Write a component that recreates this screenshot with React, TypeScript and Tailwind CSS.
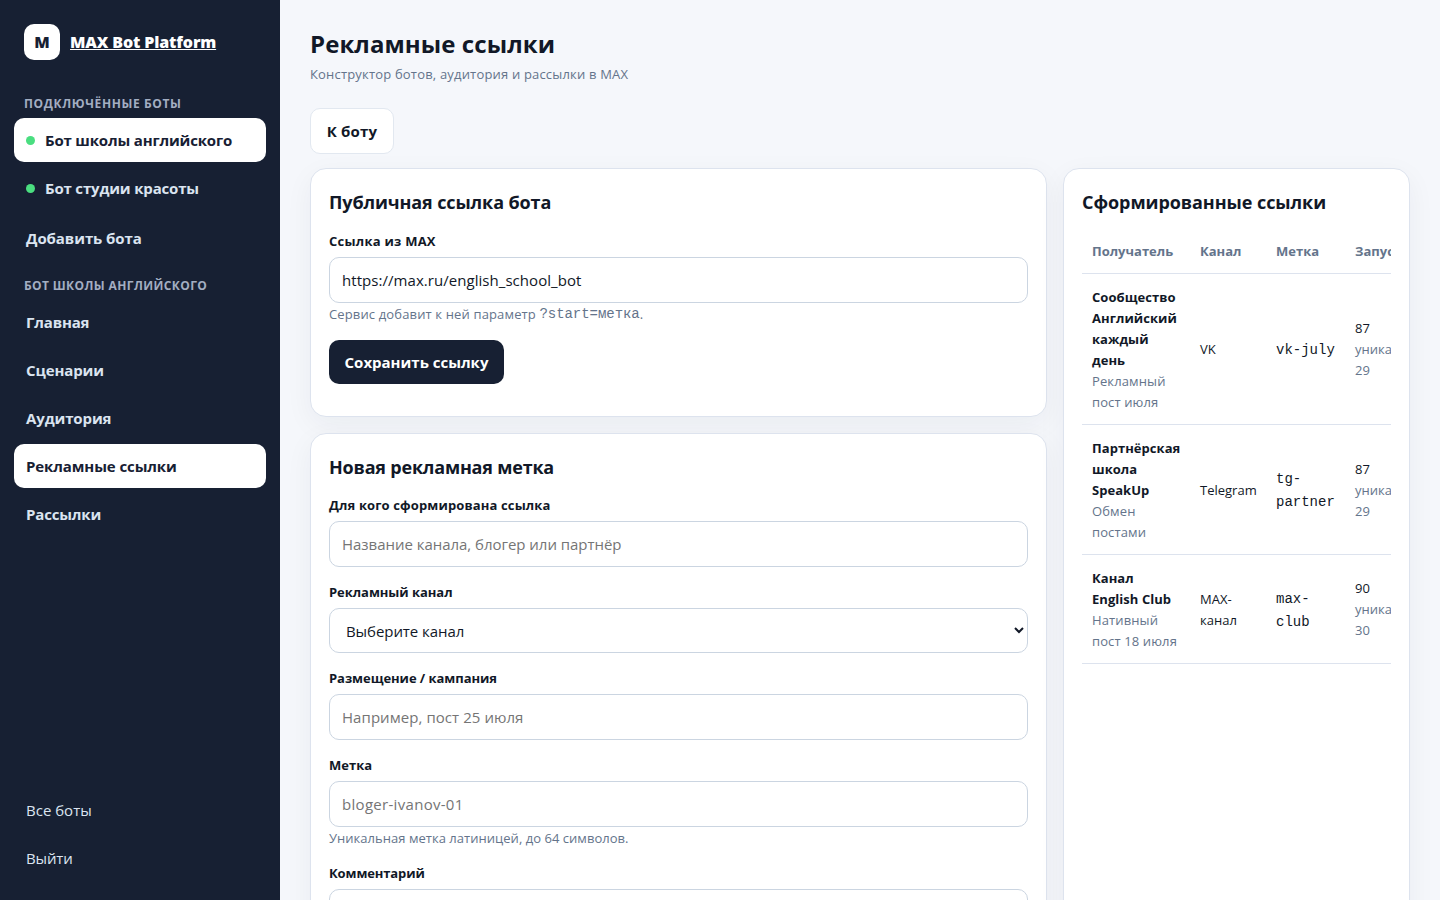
import type { ReactNode } from "react";

function NavItem({ children, active = false, dot = false, light = false, className = "" }: { children: ReactNode; active?: boolean; dot?: boolean; light?: boolean; className?: string }) {
  return (
    <a
      className={`flex h-11 shrink-0 items-center gap-2.5 rounded-[10px] px-3 text-[15px] ${light ? "font-normal" : "font-bold"} ${
        active ? "bg-white text-[#172033]" : "text-[#dbe4f0]"
      } ${className}`}
    >
      {dot && <span className="size-[9px] shrink-0 rounded-full bg-[#4ade80]" />}
      <span className="whitespace-nowrap">{children}</span>
    </a>
  );
}

function SectionLabel({ children, className }: { children: ReactNode; className: string }) {
  return <div className={`mb-[5px] h-[18px] shrink-0 whitespace-nowrap px-2.5 text-xs/[18px] font-bold text-[#a3aec2] ${className}`}>{children}</div>;
}

function Card({ title, titleClass, className, children }: { title: string; titleClass: string; className: string; children: ReactNode }) {
  return (
    <section className={`rounded-2xl border border-[#dde3ee] bg-white p-[18px] shadow-[0_8px_28px_rgba(24,32,51,0.05)] ${className}`}>
      <h2 className={`h-[30px] whitespace-nowrap text-lg/[30px] font-bold ${titleClass}`}>{title}</h2>
      {children}
    </section>
  );
}

function Field({ label, hint, className = "mb-[15px]", labelClass, children }: { label: string; hint?: ReactNode; className?: string; labelClass: string; children: ReactNode }) {
  return (
    <div className={`flex flex-col ${className}`}>
      <label className={`mb-1.5 text-[13px]/5 font-bold ${labelClass}`}>{label}</label>
      {children}
      {hint && <div className="mt-px text-[13px]/5 text-[#64748b]">{hint}</div>}
    </div>
  );
}

const inputClass = "h-[46px] w-full rounded-[10px] border border-[#cbd5e1] bg-white px-3 text-[15px] text-[#111827] placeholder:text-[#757575]";

const rows = [
  { name: ["Сообщество", "Английский", "каждый", "день"], note: ["Рекламный", "пост июля"], channel: ["VK"], tag: ["vk-july"], runs: "87", unique: "29" },
  { name: ["Партнёрская", "школа", "SpeakUp"], note: ["Обмен", "постами"], channel: ["Telegram"], tag: ["tg-", "partner"], runs: "87", unique: "29" },
  { name: ["Канал", "English Club"], note: ["Нативный", "пост 18 июля"], channel: ["MAX-", "канал"], tag: ["max-", "club"], runs: "90", unique: "30" },
];

function Lines({ items, className = "" }: { items: string[]; className?: string }) {
  return (
    <>
      {items.map((line) => (
        <span key={line} className={`block whitespace-nowrap ${className}`}>{line}</span>
      ))}
    </>
  );
}

export default function App() {
  return (
    <div className="flex h-[900px] overflow-hidden bg-[#f5f7fb] font-['Open_Sans','Noto_Sans',sans-serif] text-[#111827]">
      <aside className="flex w-[280px] shrink-0 flex-col bg-[#172033] px-3.5 pt-6 pb-5">
        <div className="flex items-center gap-2.5 px-2.5">
          <div className="grid size-9 place-items-center rounded-[10px] bg-white text-base font-extrabold text-[#172033]">M</div>
          <a className="whitespace-nowrap text-base font-extrabold tracking-[-0.13px] text-white underline">MAX Bot Platform</a>
        </div>
        <SectionLabel className="mt-[35px] tracking-[0.62px]">ПОДКЛЮЧЁННЫЕ БОТЫ</SectionLabel>
        <nav className="flex flex-col gap-1">
          <NavItem active dot className="tracking-[-0.17px]">Бот школы английского</NavItem>
          <NavItem dot className="tracking-[-0.17px]">Бот студии красоты</NavItem>
          <NavItem className="mt-0.5 tracking-[-0.08px]">Добавить бота</NavItem>
        </nav>
        <SectionLabel className="mt-[17px] tracking-[0.38px]">БОТ ШКОЛЫ АНГЛИЙСКОГО</SectionLabel>
        <nav className="flex flex-col gap-1">
          <NavItem className="tracking-[-0.17px]">Главная</NavItem>
          <NavItem className="tracking-[-0.12px]">Сценарии</NavItem>
          <NavItem className="tracking-[-0.12px]">Аудитория</NavItem>
          <NavItem active className="tracking-[-0.1px]">Рекламные ссылки</NavItem>
          <NavItem className="tracking-[-0.17px]">Рассылки</NavItem>
        </nav>
        <nav className="mt-auto flex flex-col gap-1">
          <NavItem light>Все боты</NavItem>
          <NavItem light className="tracking-[-0.15px]">Выйти</NavItem>
        </nav>
      </aside>

      <main className="flex min-w-0 flex-1 flex-col px-[30px] pt-[25px]">
        <h1 className="mb-px text-2xl/[38px] font-bold tracking-[0.08px]">Рекламные ссылки</h1>
        <p className="text-[13px]/5 tracking-[0.18px] text-[#64748b]">Конструктор ботов, аудитория и рассылки в MAX</p>
        <button className="mt-6 h-[46px] w-[84px] shrink-0 whitespace-nowrap rounded-[10px] border border-[#e2e8f0] bg-white text-[15px] font-bold tracking-[0.2px]">К боту</button>

        <div className="mt-3.5 flex items-start gap-4">
          <div className="flex w-[737px] shrink-0 flex-col gap-4">
            <Card title="Публичная ссылка бота" titleClass="tracking-[-0.12px]" className="h-[249px]">
              <Field
                label="Ссылка из MAX"
                labelClass="tracking-[0.25px]"
                className="mt-3.5 mb-4"
                hint={
                  <span className="flex whitespace-pre">
                    <span className="tracking-[0.14px]">Сервис добавит к ней параметр </span>
                    <code className="pt-px font-['Liberation_Mono',monospace] text-[14px]/[19px] tracking-[-0.05px]">?start=метка</code>.
                  </span>
                }
              >
                <input className={`${inputClass} tracking-[0.05px]`} defaultValue="https://max.ru/english_school_bot" />
              </Field>
              <button className="h-11 w-[175px] whitespace-nowrap rounded-[10px] bg-[#172033] text-[15px] font-bold text-white">Сохранить ссылку</button>
            </Card>

            <Card title="Новая рекламная метка" titleClass="tracking-[-0.2px]" className="h-[660px]">
              <Field label="Для кого сформирована ссылка" labelClass="tracking-[0.13px]" className="mt-[13px] mb-[15px]">
                <input className={`${inputClass} tracking-[-0.03px]`} placeholder="Название канала, блогер или партнёр" />
              </Field>
              <Field label="Рекламный канал" labelClass="tracking-[-0.05px]">
                <select className="h-[45px] w-full rounded-[10px] border border-[#cbd5e1] bg-white px-3 text-[15px] tracking-[-0.07px] text-[#111827]">
                  <option>Выберите канал</option>
                </select>
              </Field>
              <Field label="Размещение / кампания" labelClass="tracking-[-0.05px]">
                <input className={`${inputClass} tracking-[0.06px]`} placeholder="Например, пост 25 июля" />
              </Field>
              <Field label="Метка" labelClass="" hint={<span className="tracking-[0.03px]">Уникальная метка латиницей, до 64 символов.</span>}>
                <input className={`${inputClass} tracking-[0.3px]`} placeholder="bloger-ivanov-01" />
              </Field>
              <Field label="Комментарий" labelClass="tracking-[-0.12px]">
                <input className={inputClass} />
              </Field>
            </Card>
          </div>

          <Card title="Сформированные ссылки" titleClass="tracking-[-0.07px]" className="h-[925px] w-[347px] shrink-0">
            <div className="mt-[11px] overflow-hidden">
              <table className="w-[363px] table-fixed border-collapse text-left text-[13px]/[21px]">
                <colgroup>
                  <col className="w-[108px]" />
                  <col className="w-[76px]" />
                  <col className="w-[79px]" />
                  <col className="w-[100px]" />
                </colgroup>
                <thead>
                  <tr className="h-[45px] border-b border-[#dde3ee] text-[#64748b]">
                    <th className="px-2.5 pt-[3px] font-bold">Получатель</th>
                    <th className="px-2.5 pt-[3px] font-bold">Канал</th>
                    <th className="px-2.5 pt-[3px] font-bold">Метка</th>
                    <th className="px-2.5 pt-[3px] font-bold">Запуски</th>
                  </tr>
                </thead>
                <tbody>
                  {rows.map((row) => (
                    <tr key={row.tag.join("")} className="border-b border-[#dde3ee]">
                      <td className="px-2.5 pt-[13px] pb-[11px]">
                        <Lines items={row.name} className="font-bold tracking-[0.05px]" />
                        <Lines items={row.note} className="tracking-[0.12px] text-[#64748b]" />
                      </td>
                      <td className="px-2.5 pt-[13px] pb-[11px]"><Lines items={row.channel} /></td>
                      <td className="px-2.5 pt-[15px] pb-[11px] font-['Liberation_Mono',monospace] text-[14px]/[23px]"><Lines items={row.tag} /></td>
                      <td className="px-2.5 pt-[13px] pb-[11px]">
                        {row.runs}
                        <span className="block text-[#64748b]">уникальных</span>
                        <span className="block text-[#64748b]">{row.unique}</span>
                      </td>
                    </tr>
                  ))}
                </tbody>
              </table>
            </div>
          </Card>
        </div>
      </main>
    </div>
  );
}
